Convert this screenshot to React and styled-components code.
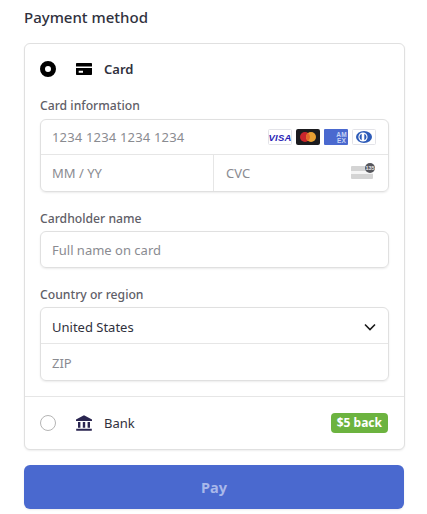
import React from "react";
import styled, { createGlobalStyle } from "styled-components";

const Global = createGlobalStyle`
  html, body { margin: 0; padding: 0; background: #fff; }
  body { font-family: "Noto Sans", "Open Sans", sans-serif; }
`;

const Page = styled.div`
  width: 427px;
  height: 514px;
  padding: 0 22px 0 24px;
  box-sizing: border-box;
  overflow: hidden;
`;

const Title = styled.h2`
  margin: 0;
  height: 43px;
  padding-top: 7px;
  box-sizing: border-box;
  font-size: 15px;
  line-height: 20px;
  font-weight: 500;
  color: #30313d;
`;

const Panel = styled.div`
  border: 1px solid #e0e0e0;
  border-radius: 6px;
  box-shadow: 0 1px 2px rgba(0, 0, 0, 0.07);
  height: 407px;
  box-sizing: border-box;
  background: #fff;
`;

const MethodRow = styled.div`
  display: flex;
  align-items: center;
  height: ${(p) => p.$height}px;
  padding: 0 16px 0 15px;
  font-size: 13px;
  color: #30313d;
  font-weight: ${(p) => (p.$active ? 600 : 400)};
`;

const Radio = styled.span`
  width: 16px;
  height: 16px;
  box-sizing: border-box;
  border-radius: 50%;
  flex: none;
  border: ${(p) => (p.$checked ? "5px solid #000" : "1px solid #b5b5b5")};
  background: #fff;
`;

const MethodIcon = styled.svg`
  width: 16px;
  height: 16px;
  flex: none;
  margin: 0 12px 0 20px;
`;

const Form = styled.div`
  padding: 3px 15px 0;
  height: 303px;
  box-sizing: border-box;
  border-bottom: 1px solid #e6e6e6;
`;

const Label = styled.div`
  font-size: 12.2px;
  line-height: 17px;
  font-weight: 500;
  color: #5f6068;
  margin: ${(p) => p.$top || 0}px 0 ${(p) => p.$bottom || 4}px;
`;

const Group = styled.div`
  border: 1px solid #e0e0e0;
  border-radius: 6px;
  box-shadow: 0 1px 2px rgba(0, 0, 0, 0.08);
  overflow: hidden;
`;

const Line = styled.div`
  display: flex;
  align-items: center;
  height: ${(p) => p.$height}px;
  box-sizing: border-box;
  padding: ${(p) => (p.$low ? "2px" : "0")} 12px 0 ${(p) => (p.$left ? "12px" : "11px")};
  font-size: 13px;
  letter-spacing: ${(p) => (p.$digits ? "0.17px" : "normal")};
  color: ${(p) => (p.$filled ? "#30313d" : "#8a8b91")};
  flex: ${(p) => (p.$grow ? 1 : "none")};
  width: ${(p) => (p.$width ? `${p.$width}px` : "auto")};
  border-top: ${(p) => (p.$top ? "1px solid #e6e6e6" : "none")};
  border-left: ${(p) => (p.$left ? "1px solid #e6e6e6" : "none")};
`;

const Split = styled.div`
  display: flex;
  border-top: 1px solid #e6e6e6;
`;

const Brands = styled.div`
  margin-left: auto;
  display: flex;
  gap: 4px;
`;

const Brand = styled.svg`
  width: 24px;
  height: 16px;
  display: block;
`;

const CvcIcon = styled.svg`
  margin-left: auto;
  width: 25px;
  height: 20px;
`;

const Chevron = styled.svg`
  margin-left: auto;
  width: 12px;
  height: 8px;
`;

const Badge = styled.span`
  margin-left: auto;
  background: #6cb33f;
  color: #fff;
  font-size: 12px;
  font-weight: 700;
  line-height: 20px;
  height: 20px;
  padding: 0 6px;
  border-radius: 4px;
`;

const PayButton = styled.button`
  display: block;
  width: 380px;
  height: 44px;
  margin-top: 15px;
  border: 0;
  border-radius: 6px;
  background: #4a69cf;
  color: #a9b8ea;
  font-family: inherit;
  font-size: 14.5px;
  font-weight: 700;
  box-shadow: 0 1px 2px rgba(0, 0, 0, 0.08);
`;

function CardIcon() {
  return (
    <MethodIcon viewBox="0 0 16 16">
      <path d="M.8 2h14.4a.8.8 0 0 1 .8.8V5.5H0V2.8A.8.8 0 0 1 .8 2z" fill="#000" />
      <path fillRule="evenodd" d="M0 7h16v6.2a.8.8 0 0 1-.8.8H.8a.8.8 0 0 1-.8-.8zM2.7 9.7H7v2H2.7z" fill="#000" />
    </MethodIcon>
  );
}

function BankIcon() {
  return (
    <MethodIcon viewBox="0 0 16 16">
      <path d="M8 0.2 16 4.5V6H0V4.5z" fill="#2a2550" />
      <path d="M2 7h2.4v5.8H2zM6.8 7h2.4v5.8H6.8zM11.6 7H14v5.8h-2.4zM0.2 13.8h15.6V15.8H.2z" fill="#2a2550" />
    </MethodIcon>
  );
}

function VisaIcon() {
  return (
    <Brand viewBox="0 0 24 16">
      <rect x="0.5" y="0.5" width="23" height="15" rx="1" fill="#fff" stroke="#e3e3e8" />
      <text x="12" y="11.5" textAnchor="middle" fontFamily="Liberation Sans" fontStyle="italic" fontWeight="700" fontSize="9.5" fill="#2a1fb5">VISA</text>
    </Brand>
  );
}

function MasterIcon() {
  return (
    <Brand viewBox="0 0 24 16">
      <rect width="24" height="16" rx="2" fill="#1b1b1f" />
      <circle cx="9" cy="8" r="5" fill="#c9252d" />
      <circle cx="15" cy="8" r="5" fill="#e8a033" />
      <path d="M12 4a5 5 0 0 1 0 8 5 5 0 0 1 0-8z" fill="#e2672a" />
    </Brand>
  );
}

function AmexIcon() {
  return (
    <Brand viewBox="0 0 24 16">
      <rect width="24" height="16" rx="1" fill="#4a69cf" />
      <text x="17.5" y="7.5" textAnchor="middle" fontFamily="Liberation Sans" fontWeight="700" fontSize="6.5" fill="#c7d3f5">AM</text>
      <text x="17.5" y="14" textAnchor="middle" fontFamily="Liberation Sans" fontWeight="700" fontSize="6.5" fill="#c7d3f5">EX</text>
    </Brand>
  );
}

function DinersIcon() {
  return (
    <Brand viewBox="0 0 24 16">
      <rect x="0.5" y="0.5" width="23" height="15" rx="1" fill="#fff" stroke="#e3e3e8" />
      <ellipse cx="12" cy="8" rx="8" ry="6" fill="#2d5bb8" />
      <circle cx="11" cy="8" r="4.6" fill="#fff" />
      <path d="M9.7 4.8v6.4a3.4 3.4 0 0 1 0-6.4zM12.3 4.8a3.4 3.4 0 0 1 0 6.4z" fill="#2d5bb8" />
    </Brand>
  );
}

function Cvc() {
  return (
    <CvcIcon viewBox="0 0 25 20">
      <rect x="0" y="3" width="22" height="13" rx="1" fill="#d4d4d4" />
      <rect x="0" y="8" width="22" height="3" fill="#f5f5f5" />
      <circle cx="19" cy="5" r="5" fill="#55565c" />
      <text x="19" y="7" textAnchor="middle" fontFamily="Liberation Sans" fontWeight="700" fontSize="5.5" fill="#e8e8e8">135</text>
    </CvcIcon>
  );
}

export default function App() {
  return (
    <Page>
      <Global />
      <Title>Payment method</Title>
      <Panel>
        <MethodRow $height={50} $active>
          <Radio $checked />
          <CardIcon />
          Card
        </MethodRow>
        <Form>
          <Label $bottom={5}>Card information</Label>
          <Group>
            <Line $height={34} $digits>
              1234 1234 1234 1234
              <Brands>
                <VisaIcon />
                <MasterIcon />
                <AmexIcon />
                <DinersIcon />
              </Brands>
            </Line>
            <Split>
              <Line $height={36} $width={172}>MM / YY</Line>
              <Line $height={36} $grow $left>
                CVC
                <Cvc />
              </Line>
            </Split>
          </Group>
          <Label $top={18}>Cardholder name</Label>
          <Group>
            <Line $height={35}>Full name on card</Line>
          </Group>
          <Label $top={18}>Country or region</Label>
          <Group>
            <Line $height={35} $filled $low>
              United States
              <Chevron viewBox="0 0 12 8">
                <path d="M1 1.5 6 6.5 11 1.5" fill="none" stroke="#1a1a1a" strokeWidth="1.6" />
              </Chevron>
            </Line>
            <Line $top $height={37} $low>ZIP</Line>
          </Group>
        </Form>
        <MethodRow $height={52}>
          <Radio />
          <BankIcon />
          Bank
          <Badge>$5 back</Badge>
        </MethodRow>
      </Panel>
      <PayButton>Pay</PayButton>
    </Page>
  );
}
